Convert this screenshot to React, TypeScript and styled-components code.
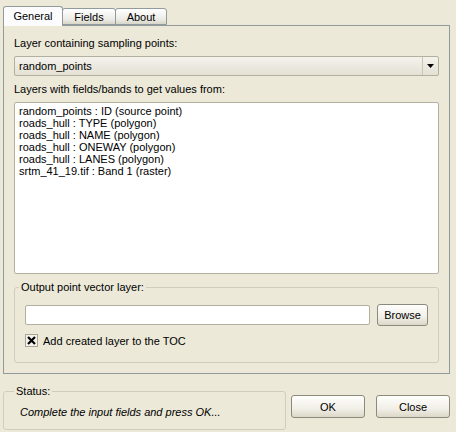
import React, { useState } from 'react';
import styled, { createGlobalStyle } from 'styled-components';

const GlobalStyle = createGlobalStyle`
  html, body {
    margin: 0;
    padding: 0;
    background: #ece9d8;
  }
  body {
    font-family: 'Liberation Sans', Arial, sans-serif;
    font-size: 11px;
    color: #000;
  }
`;

const Dialog = styled.div`
  width: 456px;
  height: 432px;
  box-sizing: border-box;
  padding: 6px 6px 0 3px;
  display: flex;
  flex-direction: column;
  background: #ece9d8;
`;

const TabBar = styled.div`
  display: flex;
  align-items: flex-end;
  height: 19px;
  position: relative;
  z-index: 1;
`;

const Tab = styled.div<{ $active?: boolean; $w: number }>`
  box-sizing: border-box;
  width: ${({ $w }) => $w}px;
  height: ${({ $active }) => ($active ? '20px' : '17px')};
  margin-bottom: ${({ $active }) => ($active ? '-1px' : '0')};
  display: flex;
  align-items: center;
  justify-content: center;
  padding-bottom: ${({ $active }) => ($active ? '1px' : '0')};
  border: 1px solid #919b9c;
  border-bottom: ${({ $active }) => ($active ? 'none' : '1px solid #919b9c')};
  border-radius: 3px 3px 0 0;
  background: ${({ $active }) =>
    $active ? '#fcfcfe' : 'linear-gradient(#ffffff, #ecebe5 70%, #d8d5c8)'};
  margin-left: -1px;
  &:first-child { margin-left: 0; }
`;

const Pane = styled.div`
  box-sizing: border-box;
  height: 349px;
  border: 1px solid #919b9c;
  padding: 10px 10px 10px 10px;
  display: flex;
  flex-direction: column;
  background: #ece9d8;
`;

const Label = styled.div<{ $gap?: number }>`
  height: 14px;
  line-height: 14px;
  margin-top: ${({ $gap }) => $gap ?? 0}px;
`;

const Combo = styled.div`
  box-sizing: border-box;
  margin-top: 6px;
  height: 20px;
  display: flex;
  border: 1px solid #b4b0a0;
  border-radius: 2px;
  background: linear-gradient(#f3f2ec, #e4e1d4);
`;

const ComboText = styled.div`
  flex: 1;
  padding-left: 4px;
  line-height: 18px;
`;

const ComboArrow = styled.div`
  width: 15px;
  border-left: 1px solid #c9c6b6;
  display: flex;
  align-items: center;
  justify-content: center;
`;

const ListBox = styled.div`
  box-sizing: border-box;
  margin-top: 6px;
  height: 172px;
  border: 1px solid #b4b0a0;
  border-radius: 2px;
  background: #fff;
  padding: 2px 4px;
`;

const ListItem = styled.div`
  height: 12px;
  line-height: 12px;
  white-space: nowrap;
`;

const GroupBox = styled.fieldset`
  box-sizing: border-box;
  flex: 1;
  margin: 7px 0 0 0;
  border: 1px solid #d0cdbf;
  border-radius: 3px;
  padding: 10px 10px 0 10px;
  min-width: 0;
`;

const Legend = styled.legend`
  padding: 0 2px;
  margin-left: -6px;
  line-height: 13px;
`;

const Row = styled.div`
  display: flex;
  align-items: center;
  gap: 7px;
`;

const TextInput = styled.input`
  box-sizing: border-box;
  flex: 1;
  height: 20px;
  border: 1px solid #b4b0a0;
  border-radius: 2px;
  background: #fff;
  font: inherit;
  padding: 0 3px;
  outline: none;
`;

const Button = styled.button<{ $w: number; $h: number }>`
  box-sizing: border-box;
  width: ${({ $w }) => $w}px;
  height: ${({ $h }) => $h}px;
  border: 1px solid #8c8a7c;
  border-radius: 3px;
  background: linear-gradient(#fefefd, #f1efe7 60%, #dcd8c8);
  font: inherit;
  color: #000;
  padding: 0;
`;

const CheckRow = styled.label`
  display: flex;
  align-items: center;
  gap: 5px;
  margin-top: 8px;
  height: 13px;
`;

const Check = styled.span`
  width: 13px;
  height: 13px;
  box-sizing: border-box;
  border: 1px solid #a8a595;
  background: #f4f3ee;
  display: flex;
  align-items: center;
  justify-content: center;
`;

const Footer = styled.div`
  display: flex;
  align-items: flex-start;
  margin-top: 11px;
`;

const StatusBox = styled.fieldset`
  box-sizing: border-box;
  width: 283px;
  height: 45px;
  margin: 0;
  border: 1px solid #d0cdbf;
  border-radius: 3px;
  padding: 0 10px 0 16px;
`;

const StatusText = styled.div`
  font-style: italic;
  margin-top: 8px;
`;

const Buttons = styled.div`
  display: flex;
  gap: 11px;
  margin-left: 5px;
  margin-top: 10px;
`;

const tabs = [
  { name: 'General', w: 60 },
  { name: 'Fields', w: 54 },
  { name: 'About', w: 52 },
];

const layers = [
  'random_points : ID (source point)',
  'roads_hull : TYPE (polygon)',
  'roads_hull : NAME (polygon)',
  'roads_hull : ONEWAY (polygon)',
  'roads_hull : LANES (polygon)',
  'srtm_41_19.tif : Band 1 (raster)',
];

const App: React.FC = () => {
  const [tab] = useState('General');
  return (
    <>
      <GlobalStyle />
      <Dialog>
        <TabBar>
          {tabs.map((t) => (
            <Tab key={t.name} $w={t.w} $active={t.name === tab}>{t.name}</Tab>
          ))}
        </TabBar>
        <Pane>
          <Label>Layer containing sampling points:</Label>
          <Combo>
            <ComboText>random_points</ComboText>
            <ComboArrow>
              <svg width="7" height="4" viewBox="0 0 7 4">
                <path d="M0 0h7L3.5 4z" fill="#000" />
              </svg>
            </ComboArrow>
          </Combo>
          <Label $gap={6}>Layers with fields/bands to get values from:</Label>
          <ListBox>
            {layers.map((l) => (
              <ListItem key={l}>{l}</ListItem>
            ))}
          </ListBox>
          <GroupBox>
            <Legend>Output point vector layer:</Legend>
            <Row>
              <TextInput />
              <Button $w={51} $h={22}>Browse</Button>
            </Row>
            <CheckRow>
              <Check>
                <svg width="9" height="9" viewBox="0 0 9 9">
                  <path d="M1 1L8 8M8 1L1 8" stroke="#000" strokeWidth="2.2" />
                </svg>
              </Check>
              Add created layer to the TOC
            </CheckRow>
          </GroupBox>
        </Pane>
        <Footer>
          <StatusBox>
            <Legend>Status:</Legend>
            <StatusText>Complete the input fields and press OK...</StatusText>
          </StatusBox>
          <Buttons>
            <Button $w={74} $h={23}>OK</Button>
            <Button $w={74} $h={23}>Close</Button>
          </Buttons>
        </Footer>
      </Dialog>
    </>
  );
};

export default App;
